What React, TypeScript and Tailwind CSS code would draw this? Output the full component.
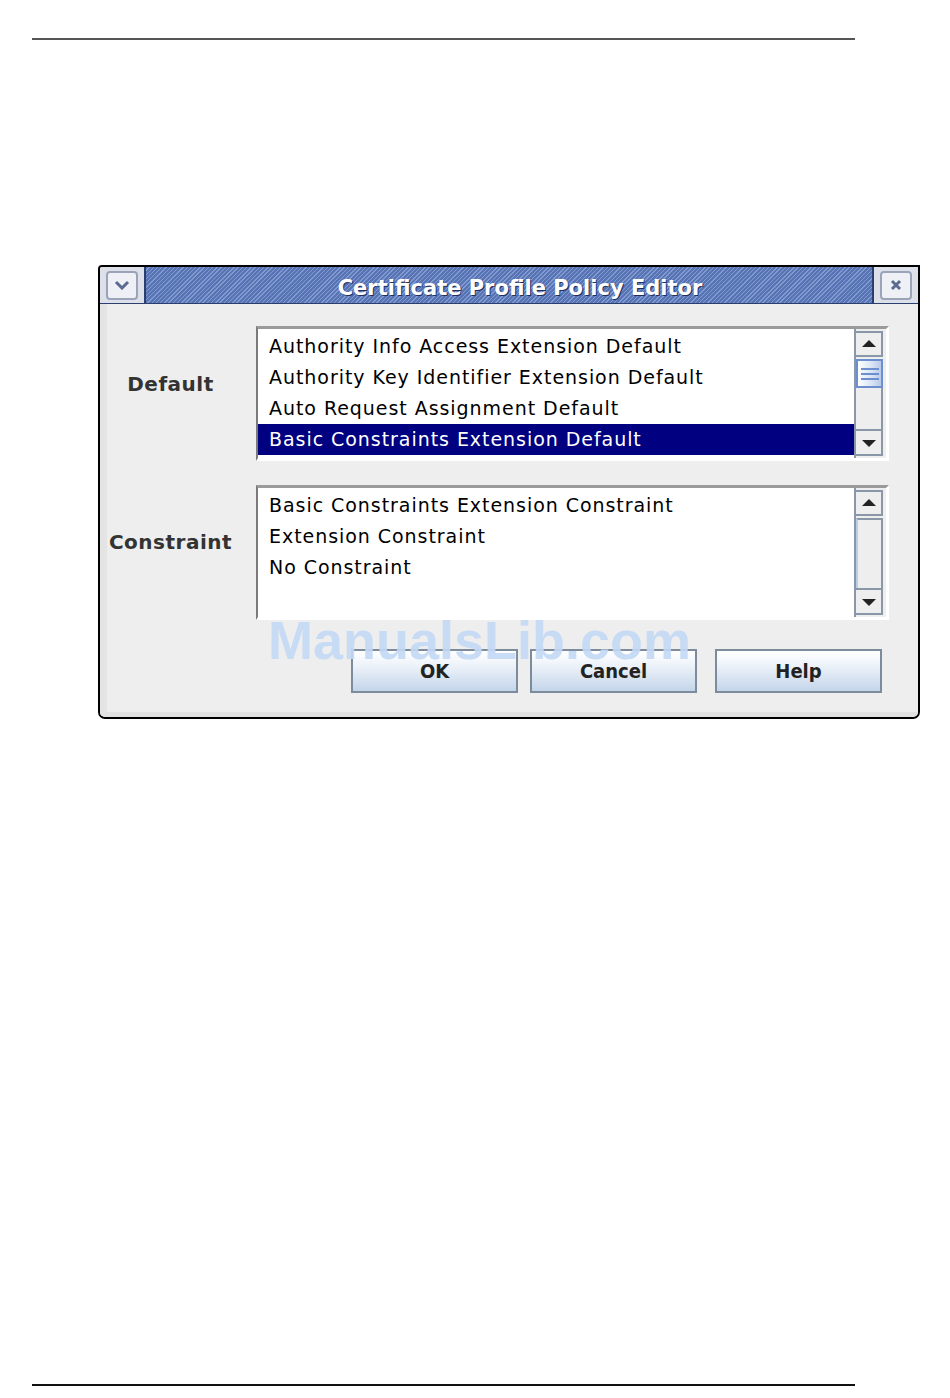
import React from 'react';

const defaults = [
  'Authority Info Access Extension Default',
  'Authority Key Identifier Extension Default',
  'Auto Request Assignment Default',
  'Basic Constraints Extension Default',
];

const constraints = [
  'Basic Constraints Extension Constraint',
  'Extension Constraint',
  'No Constraint',
];

function ArrowUp() {
  return (
    <svg width="14" height="8" viewBox="0 0 14 8">
      <path d="M7 0 L14 7 L0 7 Z" fill="#222" />
    </svg>
  );
}

function ArrowDown() {
  return (
    <svg width="14" height="8" viewBox="0 0 14 8">
      <path d="M0 1 L14 1 L7 8 Z" fill="#222" />
    </svg>
  );
}

function ScrollBar({ thumb }: { thumb: boolean }) {
  return (
    <div className="w-[32px] h-full flex flex-col bg-[#eeeeee] border-l-2 border-[#8a97a8] py-[2px] pr-[3px]">
      <div className="h-[26px] flex items-center justify-center border-2 border-[#8a97a8] border-l-0 bg-[#eeeeee]">
        <ArrowUp />
      </div>
      {thumb ? (
        <div className="h-[29px] mt-[2px] border-2 border-[#6c8fd0] bg-[linear-gradient(90deg,#ffffff,#d9e4f4_60%,#b9cbe8)] flex flex-col items-center justify-center gap-[3px]">
          <div className="w-[18px] h-[2px] bg-[#6c8fd0]" />
          <div className="w-[18px] h-[2px] bg-[#6c8fd0]" />
          <div className="w-[18px] h-[2px] bg-[#6c8fd0]" />
        </div>
      ) : null}
      <div
        className={
          'flex-1 border-r-2 border-[#8a97a8] ' +
          (thumb ? '' : 'border-t-2 border-t-[#8a97a8] border-l-2 border-l-[#b8cde8] mt-[2px]')
        }
      />
      <div className="h-[27px] flex items-center justify-center border-2 border-[#8a97a8] border-l-0 bg-[#eeeeee]">
        <ArrowDown />
      </div>
    </div>
  );
}

function ListBox({ items, selected, thumb }: { items: string[]; selected: number; thumb: boolean }) {
  return (
    <div className="w-[633px] h-[135px] flex bg-white border-t-[3px] border-t-[#9a9a9a] border-l-2 border-l-[#7a7a7a] border-r-[3px] border-r-white border-b-[3px] border-b-white">
      <div className="flex-1 flex flex-col pt-[2px]">
        {items.map((t, i) => (
          <div
            key={t}
            className={
              'h-[31px] pl-[11px] flex items-center text-[19px] tracking-[0.95px] ' +
              (i === selected ? 'bg-[#000080] text-white' : 'text-black')
            }
          >
            {t}
          </div>
        ))}
      </div>
      <ScrollBar thumb={thumb} />
    </div>
  );
}

function WinButton({ label, extra }: { label: string; extra?: string }) {
  return (
    <button
      className={
        'w-[167px] h-[44px] border-2 border-[#7d8c9c] bg-[linear-gradient(180deg,#ffffff_0%,#eef3fa_35%,#c4d5ea_100%)] text-[20px] font-bold text-[#222] [font-family:"DejaVu_Sans_Condensed","DejaVu_Sans",sans-serif] ' +
        (extra ?? '')
      }
    >
      {label}
    </button>
  );
}

export default function App() {
  return (
    <div className="relative w-[950px] h-[1398px] bg-white [font-family:'DejaVu_Sans',sans-serif]">
      <div className="pt-[38px] pl-[32px]">
        <div className="w-[823px] h-[2px] bg-[#555555]" />
      </div>

      {/* Dialog */}
      <div className="ml-[98px] mt-[225px] w-[822px] h-[454px] border-2 border-black rounded-tl-[4px] rounded-b-[7px] bg-[#eeeeee] flex flex-col overflow-hidden">
        {/* Title bar */}
        <div className="h-[37px] flex border-b border-[#2b3f6e]">
          <div className="w-[46px] bg-[#dde0e8] flex items-center justify-center border-r-2 border-[#2b3f6e]">
            <div className="w-[32px] h-[29px] rounded-[4px] border-2 border-[#9aa3b8] bg-[#eef0f6] flex items-center justify-center">
              <svg width="16" height="10" viewBox="0 0 16 10">
                <path d="M2 2 L8 8 L14 2" stroke="#5a6a90" strokeWidth="3" fill="none" />
              </svg>
            </div>
          </div>
          <div className="flex-1 flex items-center justify-center pt-[8px] pl-[22px] bg-[repeating-linear-gradient(135deg,#5874b4_0px,#5874b4_2px,#819ad0_2px,#819ad0_3px)]">
            <span className="text-white font-bold text-[21px] [text-shadow:1px_1px_0_#1f2f5c]">
              Certificate Profile Policy Editor
            </span>
          </div>
          <div className="w-[46px] bg-[#dde0e8] flex items-center justify-center border-l-2 border-[#2b3f6e]">
            <div className="w-[32px] h-[29px] rounded-[4px] border-2 border-[#9aa3b8] bg-[#eef0f6] flex items-center justify-center">
              <svg width="12" height="12" viewBox="0 0 12 12">
                <path d="M2 2 L10 10 M10 2 L2 10" stroke="#5a6a90" strokeWidth="3" fill="none" />
              </svg>
            </div>
          </div>
        </div>

        {/* Body */}
        <div className="flex-1 flex border-l-[7px] border-[#e4e4e4] border-b-[5px] border-b-[#e2e2e2]">
          <div className="flex-1 flex flex-col pt-[22px] pr-[30px]">
            <div className="flex items-start">
              <div className="w-[149px] pr-[22px] pt-[43px] text-center text-[20px] font-bold tracking-[0.5px] text-[#333]">Default</div>
              <ListBox items={defaults} selected={3} thumb={true} />
            </div>
            <div className="flex items-start mt-[24px]">
              <div className="w-[149px] pr-[22px] pt-[42px] text-center text-[20px] font-bold tracking-[0.5px] text-[#333]">Constraint</div>
              <ListBox items={constraints} selected={-1} thumb={false} />
            </div>
            <div className="flex justify-end gap-[12px] mt-[29px] pr-[7px]">
              <WinButton label="OK" />
              <WinButton label="Cancel" />
              <WinButton label="Help" extra="ml-[6px]" />
            </div>
          </div>
        </div>
      </div>

      {/* Watermark */}
      <div className="absolute left-[268px] top-[613px] text-[54px] font-bold text-[#c4d9f6] opacity-90 [font-family:'Liberation_Sans',Arial,sans-serif] leading-none pointer-events-none">
        ManualsLib.com
      </div>

      <div className="absolute left-[32px] top-[1384px] w-[823px] h-[2px] bg-[#111111]" />
    </div>
  );
}
